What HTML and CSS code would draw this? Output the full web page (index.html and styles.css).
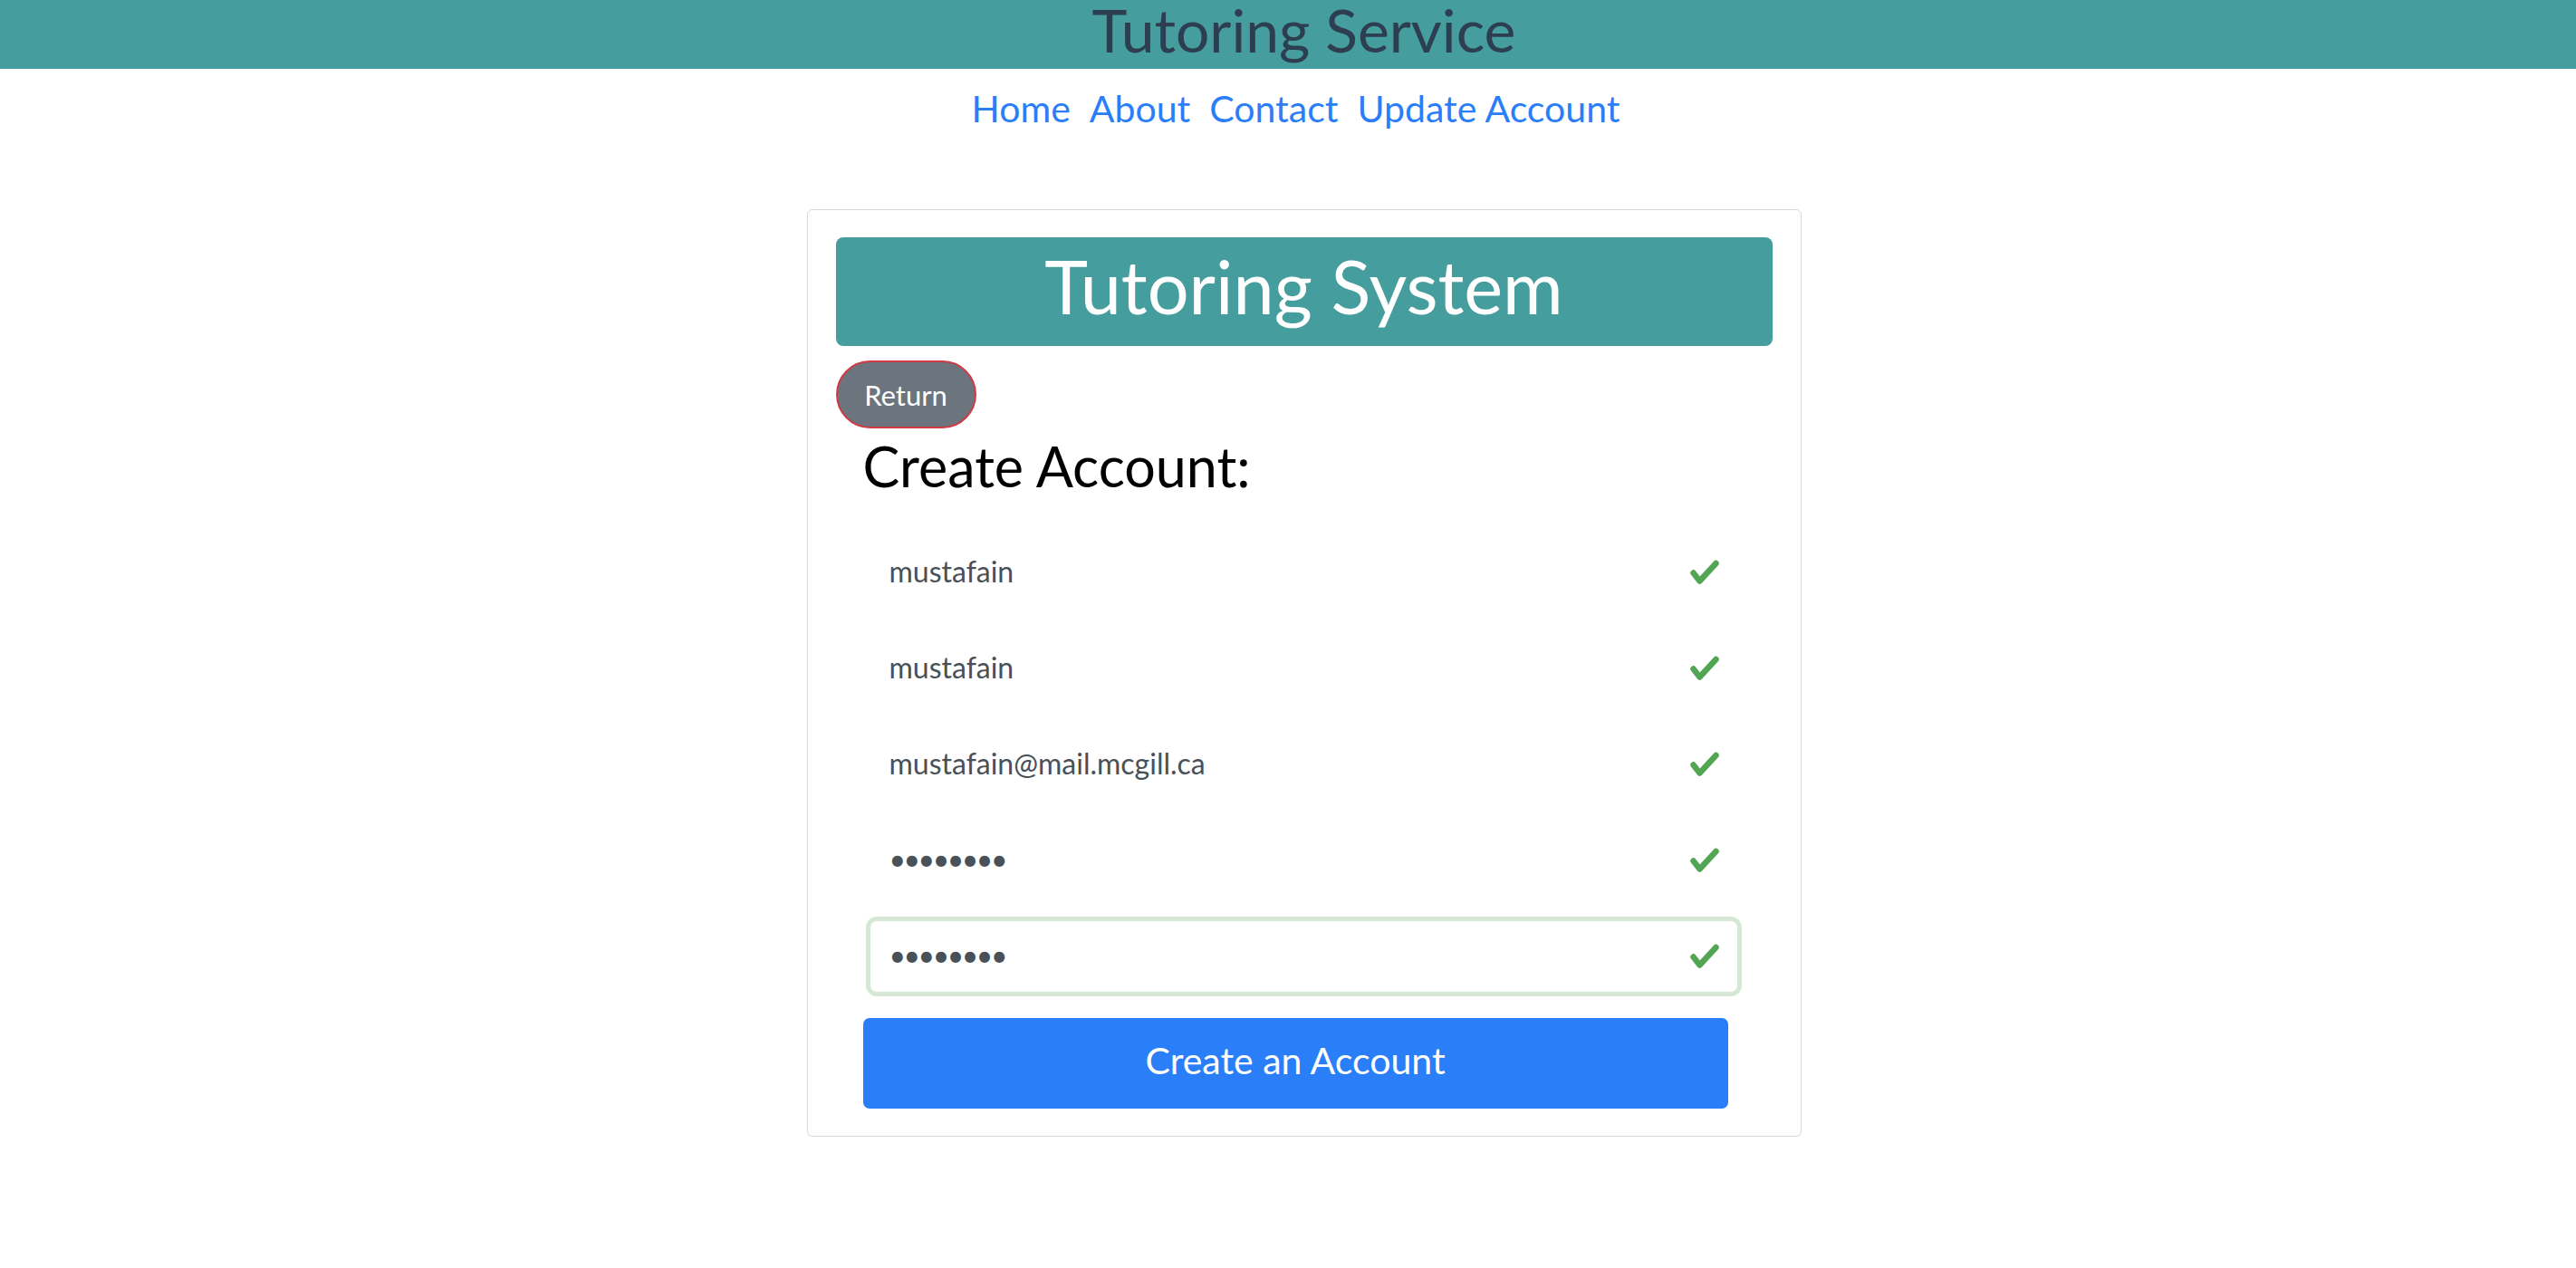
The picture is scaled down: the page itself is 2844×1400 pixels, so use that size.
FILE: index.html
```html
<!DOCTYPE html>
<html lang="en">
<head>
<meta charset="utf-8">
<title>Tutoring Service</title>
<link rel="stylesheet" href="styles.css">
</head>
<body>
<div class="app">
  <header class="topbar">
    <h1 class="site-title">Tutoring Service</h1>
  </header>
  <nav class="nav">
    <a class="nav-link" href="#">Home</a>
    <a class="nav-link" href="#">About</a>
    <a class="nav-link" href="#">Contact</a>
    <a class="nav-link" href="#">Update Account</a>
  </nav>
  <main class="page">
    <section class="card">
      <div class="banner"><h2 class="banner-title">Tutoring System</h2></div>
      <button class="return-btn" type="button">Return</button>
      <form class="form">
        <h3 class="form-title">Create Account:</h3>
        <div class="field">
          <input class="input" type="text" value="mustafain">
          <svg class="check" viewBox="0 0 32 28" width="32" height="28"><polyline points="3.5,14.5 10.5,23.5 28.5,4" /></svg>
        </div>
        <div class="field">
          <input class="input" type="text" value="mustafain">
          <svg class="check" viewBox="0 0 32 28" width="32" height="28"><polyline points="3.5,14.5 10.5,23.5 28.5,4" /></svg>
        </div>
        <div class="field">
          <input class="input" type="text" value="mustafain@mail.mcgill.ca">
          <svg class="check" viewBox="0 0 32 28" width="32" height="28"><polyline points="3.5,14.5 10.5,23.5 28.5,4" /></svg>
        </div>
        <div class="field">
          <input class="input input-secret" type="password" value="password">
          <svg class="check" viewBox="0 0 32 28" width="32" height="28"><polyline points="3.5,14.5 10.5,23.5 28.5,4" /></svg>
        </div>
        <div class="field">
          <input class="input input-secret is-focused" type="password" value="password">
          <svg class="check" viewBox="0 0 32 28" width="32" height="28"><polyline points="3.5,14.5 10.5,23.5 28.5,4" /></svg>
        </div>
        <button class="submit" type="button">Create an Account</button>
      </form>
    </section>
  </main>
</div>
</body>
</html>
```

FILE: styles.css
```css
html, body {
  margin: 0;
  padding: 0;
  background: #ffffff;
}

body {
  font-family: "Lato", "Liberation Sans", sans-serif;
  color: #2c3e50;
}

.app {
  text-align: center;
}

.topbar {
  background: #469d9d;
  height: 76px;
  box-sizing: border-box;
  padding-left: 35px;
  padding-bottom: 11px;
}

.site-title {
  margin: 0;
  font-size: 66px;
  line-height: 65px;
  font-weight: 400;
  color: #2c3e50;
}

.nav {
  display: flex;
  justify-content: center;
  gap: 21px;
  padding-top: 20px;
  padding-left: 17px;
  line-height: 48px;
  font-size: 41px;
}

.nav-link {
  color: #2a7ef8;
  text-decoration: none;
}

.page {
  padding-left: 35px;
  padding-top: 87px;
}

.card {
  width: 1098px;
  box-sizing: border-box;
  margin: 0 auto;
  border: 1px solid #d9d9d9;
  border-radius: 6px;
  box-shadow: 0 1px 1px rgba(0, 0, 0, 0.06);
  padding: 30px 31px 30px;
  text-align: left;
}

.banner {
  background: #469d9d;
  height: 120px;
  border-radius: 8px;
  text-align: center;
}

.banner-title {
  margin: 0;
  font-size: 81px;
  font-weight: 400;
  line-height: 108px;
  color: #ffffff;
}

.return-btn {
  display: block;
  margin-top: 16px;
  width: 155px;
  height: 75px;
  box-sizing: border-box;
  border: 2px solid #cf3a45;
  border-radius: 38px;
  background: #6c757d;
  color: #ffffff;
  font-family: "Lato", "Liberation Sans", sans-serif;
  font-size: 31px;
  padding: 0;
}

.form {
  display: flex;
  flex-direction: column;
  margin: 6px 0 0 30px;
  width: 965px;
}

.form-title {
  margin: 0 0 42px;
  font-size: 61px;
  line-height: 72px;
  font-weight: 400;
  color: #000000;
}

.field {
  position: relative;
  margin-left: 8px;
  width: 957px;
  height: 78px;
  margin-bottom: 28px;
}

.input {
  display: block;
  width: 100%;
  height: 100%;
  box-sizing: border-box;
  border: 1px solid transparent;
  border-radius: 7px;
  padding: 0 60px 4px 20px;
  font-family: "Lato", "Liberation Sans", sans-serif;
  font-size: 32px;
  color: #495057;
  background: #ffffff;
  outline: none;
}

.input-secret {
  letter-spacing: -2.5px;
}

.input.is-focused {
  box-shadow: 0 0 0 5px #d5e8d5;
}

.check {
  position: absolute;
  right: 20px;
  top: 50%;
  margin-top: -14px;
  fill: none;
  stroke: #52a552;
  stroke-width: 6.5;
  stroke-linecap: round;
  stroke-linejoin: round;
}

.submit {
  margin-top: 1px;
  width: 955px;
  height: 100px;
  border: none;
  border-radius: 7px;
  background: #2a7ef8;
  color: #ffffff;
  font-family: "Lato", "Liberation Sans", sans-serif;
  font-size: 41px;
  line-height: 93px;
  padding: 0 0 7px;
}
```
